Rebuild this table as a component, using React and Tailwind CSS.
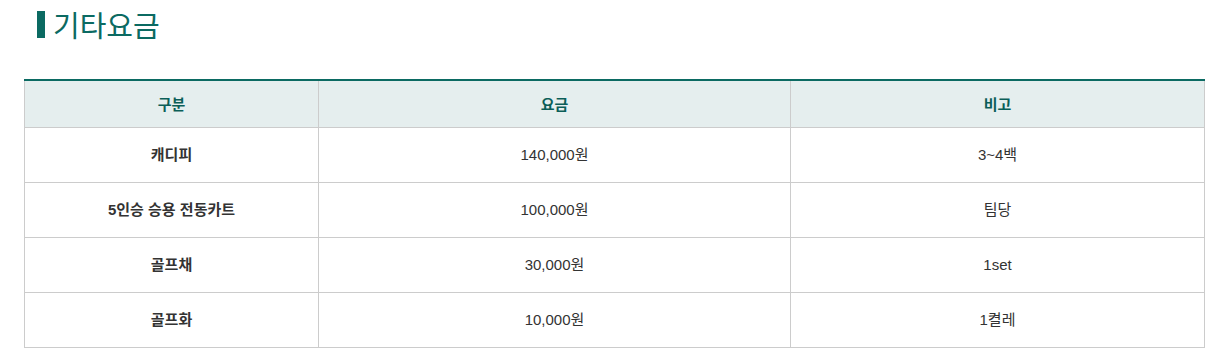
import React from "react";

const rows = [
    { name: "캐디피", price: "140,000원", note: "3~4백" },
    { name: "5인승 승용 전동카트", price: "100,000원", note: "팀당" },
    { name: "골프채", price: "30,000원", note: "1set" },
    { name: "골프화", price: "10,000원", note: "1켤레" },
];

function App() {
    return (
        <div className="bg-white w-[1221px] h-[361px] font-['Liberation_Sans','Noto_Sans_CJK_KR',sans-serif] text-[#333]">
            <div className="flex items-center pl-[37px] pt-[9px] h-[40px]">
                <span className="block w-[8px] h-[27px] bg-[#0b6a62]" />
                <h2 className="ml-[8px] text-[29px] leading-none text-[#0b6a62] font-['Noto_Sans_CJK_KR',sans-serif] font-normal">
                    기타요금
                </h2>
            </div>

            <table className="ml-[24px] mt-[39px] w-[1180px] border-collapse border-t-2 border-t-[#0b6a62] text-[15px] table-fixed">
                <colgroup>
                    <col className="w-[294px]" />
                    <col className="w-[472px]" />
                    <col className="w-[414px]" />
                </colgroup>
                <thead>
                    <tr className="bg-[#e5eeee] h-[47px]">
                        <th className="border border-[#cccccc] border-t-0 pt-[2px] font-bold text-[#0b5e58]">구분</th>
                        <th className="border border-[#cccccc] border-t-0 pt-[2px] font-bold text-[#0b5e58]">요금</th>
                        <th className="border border-[#cccccc] border-t-0 pt-[2px] font-bold text-[#0b5e58]">비고</th>
                    </tr>
                </thead>
                <tbody>
                    {rows.map((r) => (
                        <tr key={r.name} className="h-[55px]">
                            <td className="border border-[#cccccc] pt-[2px] text-center font-bold">{r.name}</td>
                            <td className="border border-[#cccccc] pt-[2px] text-center">{r.price}</td>
                            <td className="border border-[#cccccc] pt-[2px] text-center">{r.note}</td>
                        </tr>
                    ))}
                </tbody>
            </table>
        </div>
    );
}

export default App;
